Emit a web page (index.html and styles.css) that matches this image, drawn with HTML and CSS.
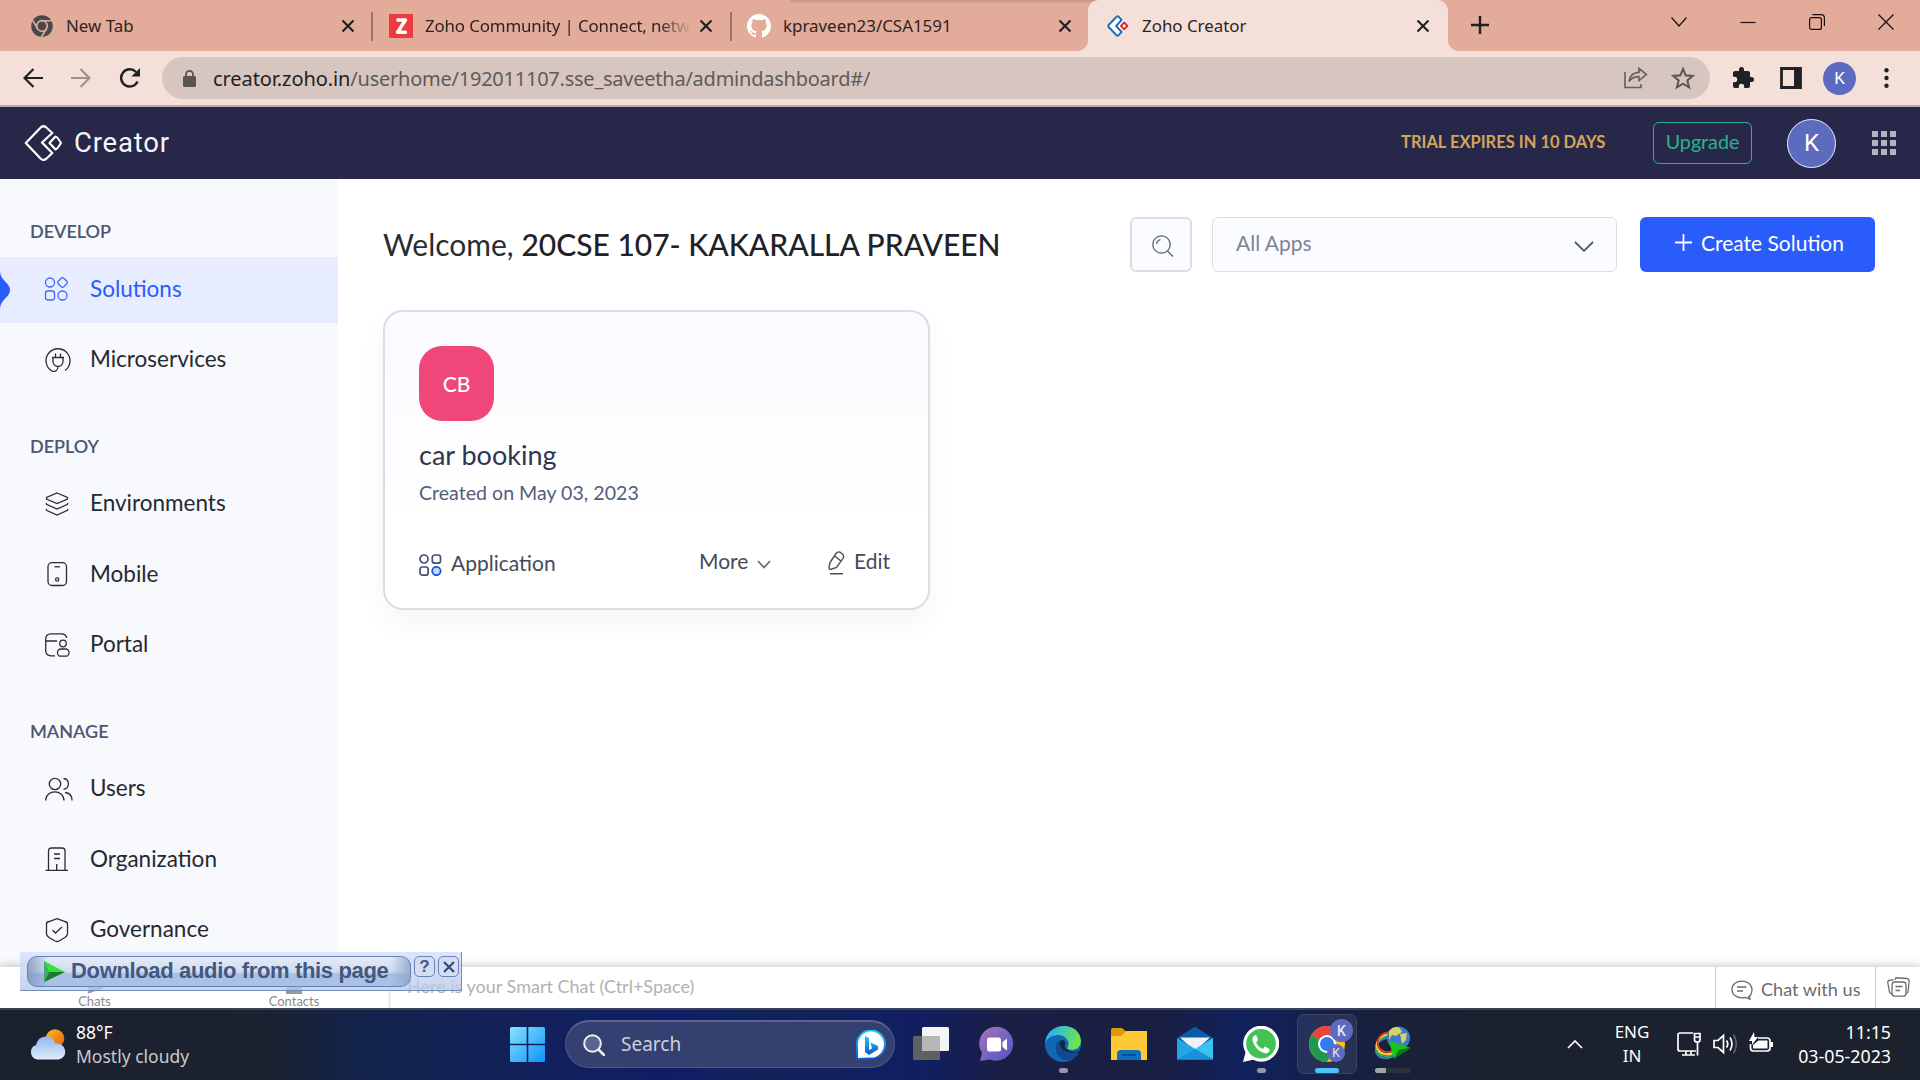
FILE: index.html
```html
<!DOCTYPE html>
<html lang="en">
<head>
<meta charset="utf-8">
<title>Zoho Creator</title>
<link rel="stylesheet" href="styles.css">
</head>
<body>
<div class="screen">

  <div class="tabstrip">
    <div class="tab">
      <svg class="favicon" viewBox="0 0 22 22"><circle cx="11" cy="11" r="10.8" fill="#474a4d"/><circle cx="11" cy="11" r="5.3" fill="none" stroke="#e3ab99" stroke-width="1.7"/><path d="M11 5.7H21M6.4 13.6 1.6 5.2M15.6 13.6 10.5 22" stroke="#e3ab99" stroke-width="1.6"/></svg>
      <span class="tab-title first">New Tab</span>
      <svg class="tab-x" viewBox="0 0 14 14"><path d="M1.5 1.5 12.5 12.5M12.5 1.5 1.5 12.5"/></svg>
    </div>
    <div class="tab tab-sep tab-two">
      <svg class="favicon big" viewBox="0 0 24 24"><path fill="#ec3a3e" d="M0 0H24V24H0z"/><path d="M8.800 6H16.500L8.500 18.300H16.500" fill="none" stroke="#fff" stroke-width="3.400" stroke-linejoin="round" stroke-linecap="round"/></svg>
      <span class="tab-title fade">Zoho Community | Connect, netw</span>
      <svg class="tab-x" viewBox="0 0 14 14"><path d="M1.5 1.5 12.5 12.5M12.5 1.5 1.5 12.5"/></svg>
    </div>
    <div class="tab tab-sep tab-three">
      <svg class="favicon big" viewBox="0 0 16 16"><path fill="#fff" d="M8 0C3.58 0 0 3.58 0 8c0 3.54 2.29 6.53 5.47 7.59.4.07.55-.17.55-.38 0-.19-.01-.82-.01-1.49-2.01.37-2.53-.49-2.69-.94-.09-.23-.48-.94-.82-1.13-.28-.15-.68-.52-.01-.53.63-.01 1.08.58 1.23.82.72 1.21 1.87.87 2.33.66.07-.52.28-.87.51-1.07-1.78-.2-3.64-.89-3.64-3.95 0-.87.31-1.59.82-2.15-.08-.2-.36-1.02.08-2.12 0 0 .67-.21 2.2.82a7.6 7.6 0 0 1 4 0c1.53-1.04 2.2-.82 2.2-.82.44 1.1.16 1.92.08 2.12.51.56.82 1.27.82 2.15 0 3.07-1.87 3.75-3.65 3.95.29.25.54.73.54 1.48 0 1.07-.01 1.93-.01 2.2 0 .21.15.46.55.38A8.01 8.01 0 0 0 16 8c0-4.42-3.58-8-8-8z"/></svg>
      <span class="tab-title">kpraveen23/CSA1591</span>
      <svg class="tab-x" viewBox="0 0 14 14"><path d="M1.5 1.5 12.5 12.5M12.5 1.5 1.5 12.5"/></svg>
    </div>
    <div class="tab tab-active">
      <svg class="favicon big" viewBox="0 0 24 24"><path d="M12 0 24 12 12 24 0 12z" fill="#fff"/><path d="M12.2 2.2 15.6 5.8 10.2 12 15.6 18 12.2 21.6Q11.5 22 10.8 21.4L2.4 12.8Q1.9 12 2.4 11.2L10.8 2.6Q11.5 2 12.2 2.2z" fill="none" stroke="#1c6fb8" stroke-width="2"/><path d="M18.2 8.4 21.4 12 18.2 15.4 15 12z" fill="none" stroke="#e6252c" stroke-width="2" stroke-linejoin="round"/></svg>
      <span class="tab-title">Zoho Creator</span>
      <svg class="tab-x" viewBox="0 0 14 14"><path d="M1.5 1.5 12.5 12.5M12.5 1.5 1.5 12.5"/></svg>
    </div>
    <svg class="newtab" viewBox="0 0 18 18"><path d="M9 0V18M0 9H18" stroke="#202124" stroke-width="2.4"/></svg>
    <div class="window-buttons">
      <svg viewBox="0 0 16 16"><path d="M.5 3.5 8 12 15.5 3.5"/></svg>
      <svg viewBox="0 0 16 16"><path d="M.5 8.5H15.5"/></svg>
      <svg viewBox="0 0 16 16"><rect x=".6" y="3.6" width="11.8" height="11.8" rx="2"/><path d="M3.4.6H12Q15.4.6 15.4 4V12"/></svg>
      <svg viewBox="0 0 16 16"><path d="M.5.5 15.5 15.5M15.5.5.5 15.5"/></svg>
    </div>
  </div>

  <div class="toolbar">
    <svg class="nav" viewBox="0 0 20 20"><path d="M20 10H2M10.5 1 1.5 10 10.5 19" fill="none" stroke="#202124" stroke-width="2.2"/></svg>
    <svg class="nav" viewBox="0 0 20 20"><path d="M0 10H18M9.5 1 18.5 10 9.5 19" fill="none" stroke="#a0918d" stroke-width="2.2"/></svg>
    <svg class="nav reload" viewBox="0 0 22 20"><path d="M18.6 13.5A8.6 8.6 0 1 1 17 4" fill="none" stroke="#202124" stroke-width="2.5"/><path d="M21 0V8.6H12.4z" fill="#202124"/></svg>
    <div class="omnibox">
      <svg class="lock" viewBox="0 0 13 17"><rect y="6" width="13" height="11" rx="1.5" fill="#5a5553"/><path d="M3 7V4.4a3.5 3.5 0 0 1 7 0V7" fill="none" stroke="#5a5553" stroke-width="1.8"/></svg>
      <span class="url"><b>creator.zoho.in</b>/userhome/192011107.sse_saveetha/admindashboard#/</span>
      <svg class="share" viewBox="0 0 24 22"><path d="M1 5V20.5H17V17M5 14.5C6 8 10 5.5 15 5.4V1.4L22.4 7.6 15 13.6V9.6C10.5 9.4 7.5 11 5 14.5z" fill="none" stroke="#665f5c" stroke-width="1.6"/></svg>
      <svg class="star" viewBox="0 0 24 24"><path d="M12 3.600 14.500 9.600 21 10.100 16 14.300 17.600 20.600 12 17.200 6.400 20.600 8 14.300 3 10.100 9.500 9.600z" fill="none" stroke="#5e5856" stroke-width="1.900"/></svg>
    </div>
    <svg class="puzzle" viewBox="0 0 24 24"><path fill="#202124" d="M20.5 11H19V7c0-1.1-.9-2-2-2h-4V3.500a2.500 2.500 0 0 0-5 0V5H4c-1.1 0-2 .9-2 2v3.800h1.500a2.700 2.700 0 0 1 0 5.400H2V20c0 1.100.9 2 2 2h3.800v-1.500a2.700 2.700 0 0 1 5.400 0V22H17c1.100 0 2-.9 2-2v-4h1.500a2.500 2.500 0 0 0 0-5z"/></svg>
    <svg class="panel" viewBox="0 0 22 22"><path d="M1.500 1.500H20.500V20.500H1.500z" fill="none" stroke="#202124" stroke-width="2.800"/><path d="M14 1H21V21H14z" fill="#202124"/></svg>
    <span class="avatar small">K</span>
    <svg class="dots" viewBox="0 0 5 20"><g fill="#202124"><circle cx="2.500" cy="2.300" r="2.200"/><circle cx="2.500" cy="10" r="2.200"/><circle cx="2.500" cy="17.700" r="2.200"/></g></svg>
  </div>

  <header class="appbar">
    <svg class="logo" viewBox="0 0 38 36"><g fill="none" stroke="#fff" stroke-width="2.200" stroke-linejoin="round"><path d="M22 2.200 28.300 8 18 17.500 28.300 28 22 34Q19.300 35.800 17 34L1.800 18 17 2.200Q19.500.3 22 2.200z"/><path d="M31.500 11.500Q33 11.500 37 18 33 24.500 31.500 24.500L25.500 18z"/></g></svg>
    <span class="brand">Creator</span>
    <span class="trial">TRIAL EXPIRES IN 10 DAYS</span>
    <span class="upgrade"><span>Upgrade</span></span>
    <span class="avatar large">K</span>
    <svg class="grid" viewBox="0 0 24 24"><path fill="#b2b5bf" d="M0 0h6v6H0zM9 0h6v6H9zM18 0h6v6h-6zM0 9h6v6H0zM9 9h6v6H9zM18 9h6v6h-6zM0 18h6v6H0zM9 18h6v6H9zM18 18h6v6h-6z"/></svg>
  </header>

  <div class="body">
    <nav class="sidebar">
      <h2 class="s1">DEVELOP</h2>
      <div class="item active">
        <svg class="notch" viewBox="0 0 10 36"><path d="M0 0C1 9 10 11 10 18S1 27 0 36z" fill="#2a5bfb"/></svg>
        <svg class="ico" viewBox="0 0 28 24"><circle cx="5" cy="5.500" r="4.500"/><path d="M16.200 1.300Q17.500.2 18.800 1.300L21.800 4.200Q22.900 5.500 21.800 6.800L18.800 9.700Q17.500 10.800 16.200 9.700L13.200 6.800Q12.100 5.500 13.200 4.200z"/><rect x=".5" y="14" width="9" height="9" rx="2.500"/><circle cx="17.500" cy="18.500" r="4.500"/></svg>
        <span>Solutions</span></div>
      <div class="item raised">
        <svg class="ico" viewBox="0 0 28 24"><path d="M20 22.500A12 12 0 1 0 6.500 22.800Q12.500 25 13 18.500M7 9.500H19M8 9.500V13Q8 18 13 18.500 18 18 18 13V9.500M10.500 5.500V9M15.500 5.500V9"/></svg>
        <span>Microservices</span></div>

      <h2 class="s2">DEPLOY</h2>
      <div class="item">
        <svg class="ico" viewBox="0 0 28 24"><path d="M12 1 22.500 5.500V7L12 11.500 1.500 7V5.500zM1 11 1.500 12.300 12 17 22.500 12.300 23 11M1 17 1.500 18.300 12 23 22.500 18.300 23 17"/></svg>
        <span>Environments</span></div>
      <div class="item">
        <svg class="ico" viewBox="0 0 28 24"><rect x="3" y=".7" width="18.500" height="22.800" rx="4"/><path d="M9.500 4.800H15" /><circle cx="12.200" cy="17.500" r="1.600"/></svg>
        <span>Mobile</span></div>
      <div class="item">
        <svg class="ico" viewBox="0 0 28 24"><path d="M21.500 5V4Q20.500 1 17 .8H6Q.8 1 .7 6V18Q1 22.500 6 22.800H10M1 8H12"/><circle cx="18" cy="10.500" r="3.300"/><rect x="12.500" y="16" width="11.500" height="7.200" rx="3.500"/></svg>
        <span>Portal</span></div>

      <h2 class="s3">MANAGE</h2>
      <div class="item">
        <svg class="ico" viewBox="0 0 28 24"><circle cx="10" cy="7" r="5.700"/><path d="M.7 23.500C1 12 18.500 12 19 23.500M18.500 1.500C25 2 25 11.500 18.500 12.300M20 15.500C25 16 27 19.500 27 23.500"/></svg>
        <span>Users</span></div>
      <div class="item">
        <svg class="ico" viewBox="0 0 28 24"><path d="M.5 23.300H23M3.500 23V4Q3.500 1 6.500 1H17Q20 1 20 4V23M9 7H15M9 11.500H15M11.700 17V23"/></svg>
        <span>Organization</span></div>
      <div class="item">
        <svg class="ico" viewBox="0 0 28 24"><path d="M12 .7 20 3.500Q22.500 4 22.500 6V16Q22.500 17.500 20 19.500L14 23Q12 24 10 23L4 19.500Q1.500 17.500 1.500 16V6Q1.500 4 4 3.500zM7.500 12 10.500 15 17 9"/></svg>
        <span>Governance</span></div>
    </nav>

    <main class="main">
      <div class="head">
        <h1>Welcome, <b>20CSE 107- KAKARALLA PRAVEEN</b></h1>
        <span class="search-btn"><svg viewBox="0 0 22 22"><circle cx="9.500" cy="9.500" r="8.700"/><path d="M15.500 16 21 21.500M4.500 9Q5 5.500 8.500 4.700"/></svg></span>
        <span class="select"><span>All Apps</span><svg viewBox="0 0 20 11"><path d="M1 1 10 9.800 19 1"/></svg></span>
        <span class="create"><svg viewBox="0 0 17 17"><path d="M8.500 0V17M0 8.500H17"/></svg><span>Create Solution</span></span>
      </div>
      <section class="card">
        <span class="tile">CB</span>
        <h3>car booking</h3>
        <p>Created on May 03, 2023</p>
        <div class="foot">
          <svg class="appico" viewBox="0 0 23 22"><g fill="none" stroke="#45506e" stroke-width="1.700"><circle cx="5" cy="5" r="4"/><rect x="13.300" y="1" width="8.200" height="8.200" rx="2.500"/><rect x="1" y="13" width="8.200" height="8.200" rx="2.500"/></g><circle cx="17.400" cy="17" r="4.200" fill="#c4d7fb" stroke="#0f5bdc" stroke-width="1.800"/></svg>
          <span class="f-app">Application</span>
          <span class="f-more">More</span>
          <svg class="f-chev" viewBox="0 0 14 9"><path d="M1 1 7 7.500 13 1"/></svg>
          <svg class="f-pen" viewBox="0 0 17 24"><path d="M2 11.500 8 2.500Q9.500.5 12 1.200L14.500 3Q16.500 5 15 7.300L8.500 16.500 2.500 18.500Q1 18.500 1 16.500zM6.800 5 12.800 10M2 22.800H15"/></svg>
          <span class="f-edit">Edit</span>
        </div>
      </section>
    </main>
  </div>

  <div class="chatbar">
    <div class="chat-tab"><svg viewBox="0 0 20 18"><path d="M10 0C22 0 23 14 12 14.500 9 15 6 17.500 2.500 17.500L4 13.500C-3 9 0 0 10 0z"/></svg><span>Chats</span></div>
    <div class="chat-tab second"><svg viewBox="0 0 20 18"><circle cx="10" cy="4.500" r="4.500"/><path d="M2 18V14Q2 10 6 10H14Q18 10 18 14V18z"/></svg><span>Contacts</span></div>
    <span class="smart">Here is your Smart Chat (Ctrl+Space)</span>
    <span class="chat-us"><svg viewBox="0 0 22 20"><path d="M17 17.500Q21 15 21 9.500C20.500-1.500 1-1.500 1 9.200 1 16 8 18.800 14.500 17.500L19 19.200 18.500 16M6 7H15.500M6 11H12"/></svg><span>Chat with us</span></span>
    <span class="notes"><svg viewBox="0 0 23 20"><rect x="5" y="5" width="14" height="14.200" rx="3"/><path d="M5 17Q3 17 2.500 15L.8 5.500Q.6 3.500 3 3.200L6.500 3M8 3 9 .8 20 1.500Q22.500 2 22.200 4L21 14.500Q20.800 16 19.500 16.500M8.500 9.500H15.500M8.500 13.500H13"/></svg></span>
  </div>

  <div class="taskbar">
    <div class="weather">
      <svg viewBox="0 0 37 31"><defs><linearGradient id="sun" x1="0" x2="1" y2="1"><stop stop-color="#f6c12f"/><stop offset="1" stop-color="#e95c0e"/></linearGradient><linearGradient id="cl" x2="0" y2="1"><stop stop-color="#8fb7f2"/><stop offset="1" stop-color="#e2edfd"/></linearGradient></defs><circle cx="26" cy="9.500" r="9.300" fill="url(#sun)"/><path d="M8 30.500A7.500 7.500 0 0 1 7.200 16C9 5 24 5 26 14.500 38 13 40 29 29 30.500z" fill="url(#cl)"/></svg>
      <div><span class="deg">88°F</span><span class="cloudy">Mostly cloudy</span></div>
    </div>
    <svg class="start" viewBox="0 0 35 35"><defs><linearGradient id="win" x2="1" y2="1"><stop stop-color="#86e3ff"/><stop offset="1" stop-color="#0b94f8"/></linearGradient></defs><path fill="url(#win)" d="M1.500 0H16.700V16.700H0V1.500Q0 0 1.500 0zM18.300 0H33.500Q35 0 35 1.500V16.700H18.300zM0 18.300H16.700V35H1.500Q0 35 0 33.500zM18.300 18.300H35V33.500Q35 35 33.500 35H18.300z"/></svg>
    <div class="search">
      <svg class="mag" viewBox="0 0 22 22"><circle cx="9.500" cy="9.500" r="8.300" fill="#59648f" stroke="#eceef4" stroke-width="2"/><path d="M15.500 15.500 21 21" stroke="#eceef4" stroke-width="2.600" stroke-linecap="round"/></svg>
      <span>Search</span>
      <svg class="bing" viewBox="0 0 30 30"><defs><linearGradient id="bi" x2="0" y2="1"><stop stop-color="#1bd0f4"/><stop offset="1" stop-color="#1452d4"/></linearGradient></defs><path d="M1 29V15A14 14 0 1 1 15 28.500z" fill="#fff" stroke="url(#bi)" stroke-width="2"/><path d="M9 6 13 8V20L16 18.500 14.500 12.500 22 16V19.500L13 25 9 22z" fill="url(#bi)"/></svg>
    </div>
    <div class="apps">
      <div class="slot"><svg viewBox="0 0 36 36"><rect y="10" width="27" height="24" rx="1.500" fill="#5f6061"/><rect x="9" y="1" width="27" height="24" rx="1.500" fill="#f4f4f4"/><path d="M9 10H27V25H9z" fill="#b7b7b7"/></svg></div>
      <div class="slot"><svg viewBox="0 0 36 36"><defs><linearGradient id="tm" x2="1" y2="1"><stop stop-color="#a873b5"/><stop offset="1" stop-color="#4d56c9"/></linearGradient></defs><path d="M1 35 3 27A17 17 0 1 1 11 33.500z" fill="url(#tm)"/><rect x="8" y="11.500" width="14" height="14" rx="2.500" fill="#fff"/><path d="M23.500 16 28 12.500V24.500L23.500 21z" fill="#fff"/></svg></div>
      <div class="slot"><svg viewBox="0 0 36 36"><defs><linearGradient id="ed" x2="1" y2=".3"><stop offset=".2" stop-color="#2bb3ea"/><stop offset="1" stop-color="#6ee255"/></linearGradient></defs><circle cx="18" cy="18" r="18" fill="#1167b4"/><path d="M0 18C1-5 35-6 36 15 36 23 27 26 22 22.500 26 17 22 10 14 9 6 9 1 13 0 18z" fill="url(#ed)"/><path d="M22 22.500C26 26 32 26 35 23 28 42 10 34 11 22 11 15 16 12.500 20 14.500 16 17 18 21 22 22.500z" fill="#124a8e"/><path d="M17 14.300C20 14 21 17 20 19 19.500 22 21 24 26 25.500 31 27 34 25 34.500 25L36 22V36L33 26C27 28 15 26 14.500 17z" fill="#17234c"/></svg><i></i></div>
      <div class="slot"><svg viewBox="0 0 36 36"><path d="M0 4Q0 2 2 2H11L15 5.500V10H0z" fill="#dd9a05"/><path d="M0 10H10L15 5H36V34H0z" fill="#fdc935"/><path d="M6 34V28Q6 24 10 24H26Q30 24 30 28V34z" fill="#0f6fbe"/><path d="M11 29H25" stroke="#0a4d8c" stroke-width="1.800"/></svg></div>
      <div class="slot"><svg viewBox="0 0 36 36"><path d="M0 12 18 .8 36 12V20H0z" fill="#0a5ca8"/><path d="M3 11.500H33L18 25z" fill="#eff2f6"/><path d="M0 12 36 33.500H0z" fill="#26a3e4"/><path d="M36 12 18 23 36 33.500z" fill="#39c3f0"/><path d="M0 33.500 18 23 36 33.500z" fill="#1793dc"/></svg></div>
      <div class="slot"><svg viewBox="0 0 36 36"><path d="M0 36 2.500 26.500A18 18 0 1 1 10 33.700z" fill="#fff"/><circle cx="18" cy="17.800" r="14.800" fill="#42c254"/><path d="M12 9Q9 10.500 9.500 14C11 21 16 26 23 27.500 26 27 27 25 26.500 23L22 20.500 19.800 23Q15 21 13.200 16.500L15 14 13.500 9.500z" fill="#fff"/></svg><i></i></div>
      <div class="slot current"><svg viewBox="0 0 36 36"><circle cx="18" cy="18" r="18" fill="#fbbf16"/><path d="M18 18 2.400 9A18 18 0 0 1 33.600 9z" fill="#e8453c"/><path d="M18 18 2.400 9A18 18 0 0 0 18 36L25 23z" fill="#1d9a50"/><circle cx="18" cy="18" r="9" fill="#fff"/><circle cx="18" cy="18" r="7" fill="#2f7df2"/></svg><em class="k1">K</em><em class="k2">K</em><i class="on"></i></div>
      <div class="slot"><svg viewBox="0 0 36 36"><g fill="none" stroke-width="2"><path d="M14 6C4 7-1 14 2 21 5 27 14 28 20 23" stroke="#3c76d6" transform="translate(-.5 6)"/><path d="M14 6C4 7-1 14 2 21 5 27 14 28 20 23" stroke="#39b13f" transform="translate(0 4)"/><path d="M14 6C4 7-1 14 2 21 5 27 14 28 20 23" stroke="#f6e53a" transform="translate(.7 2)"/><path d="M14 6C4 7-1 14 2 21 5 27 14 28 20 23" stroke="#e23a2a" transform="translate(1.500 0)"/></g><circle cx="23.500" cy="12" r="11.500" fill="#3b7cc9"/><path d="M14 5Q19-1 25 2L27 6 21 10 17 9 14 14zM25 8 32 7 31 14 27 18z" fill="#d8cf6a"/><path d="M14 15 36 22 24 24 19 33z" fill="#18c516"/><path d="M24 24 36 22 19 33z" fill="#0a7d10"/></svg><i class="wide"></i></div>
    </div>
    <div class="tray">
      <svg class="up" viewBox="0 0 16 9"><path d="M1 8 8 1 15 8"/></svg>
      <div class="lang"><span>ENG</span><span>IN</span></div>
      <svg class="net" viewBox="0 0 24 24"><path d="M16 1H3Q1 1 1 3V17Q1 19 3 19H19M5 23H18M9 19V23M14 19V23M17.500 1.500H23V8Q23 10 20.500 10 17.500 10 17.500 8zM17.500 5H23M20.500 10V23.500"/></svg>
      <svg class="snd" viewBox="0 0 24 24"><path d="M1 8.500H5L10.500 3.500V20.500L5 15.500H1zM13.500 8.500Q16 12 13.500 15.500M17 5.500Q21 12 17 18.500"/><path d="M20.500 2.500Q26 12 20.500 21.500" stroke="#59606d"/></svg>
      <svg class="bat" viewBox="0 0 24 24"><path d="M9 6H18Q21 6 21 9V16Q21 19 18 19H4Q1.500 19 1.500 16V12"/><path d="M9.500 8.500H18.500V16.500H4V13zM21 10H24V15H21zM5 0 0 9H3V13L9 5H5.500z" fill="#fff" stroke="none"/></svg>
      <div class="clock"><span class="time">11:15</span><span class="date">03-05-2023</span></div>
    </div>
  </div>

  <div class="download">
    <div class="pill"><svg viewBox="0 0 21 21"><path d="M0 0 21 11 0 21z" fill="#3be036"/><path d="M0 21 5 11H21z" fill="#1d7a34"/><path d="M0 0 5 11 0 21z" fill="#3fa873"/></svg><span>Download audio from this page</span></div>
    <span class="box">?</span>
    <span class="box"><svg viewBox="0 0 12 12"><path d="M1 1 11 11M11 1 1 11" stroke="#34497c" stroke-width="2.200"/></svg></span>
  </div>
</div>
</body>
</html>
```
FILE: styles.css
```css
* { box-sizing: border-box; }
body { margin: 0; }
h1, h2, h3, p { margin: 0; font-weight: 400; }
svg { display: block; flex: none; }
span { white-space: nowrap; }

.screen {
  position: relative;
  width: 1920px;
  height: 1080px;
  overflow: hidden;
  display: flex;
  flex-direction: column;
  background: #fff;
  font-family: "Lato", sans-serif;
}

/* browser tabs */
.tabstrip {
  height: 51px;
  flex: none;
  display: flex;
  background: linear-gradient(#0002, #0000) 790px 0 / 340px 4px no-repeat #e3ab99;
  font-family: "Noto Sans", sans-serif;
  font-size: 16.900px;
  color: #2d2422;
}
.tab { width: 371px; display: flex; align-items: center; padding: 0 16px 0 31px; }
.tab-two { width: 359px; padding: 0 17px 0 18px; }
.tab-three { width: 358px; padding: 0 16px 0 17px; }
.tab-sep { background: linear-gradient(#9c7468, #9c7468) 0 12px / 2px 29px no-repeat; }
.tab-active {
  width: 360px;
  padding: 0 18px 0 18px;
  background: #f5e0d9;
  border-radius: 11px 11px 0 0;
  position: relative;
}
.tab-active::before, .tab-active::after {
  content: "";
  position: absolute;
  bottom: 0;
  width: 10px;
  height: 10px;
}
.tab-active::before { left: -10px; background: radial-gradient(circle at 0 0, #0000 9.5px, #f5e0d9 10px); }
.tab-active::after { right: -10px; background: radial-gradient(circle at 100% 0, #0000 9.5px, #f5e0d9 10px); }
.favicon { width: 22px; height: 22px; }
.favicon.big { width: 24px; height: 24px; }
.tab-title { margin-left: 12px; padding-bottom: 1px; }
.first { margin-left: 13px; }
.fade {
  width: 266px;
  letter-spacing: -.150px;
  mask-image: linear-gradient(90deg, #000 88%, #0000 100%);
}
.tab-x { width: 14px; height: 14px; margin-left: auto; fill: none; stroke: #202124; stroke-width: 2.2; }
.newtab { width: 18px; height: 18px; margin: 16px 0 0 23px; }
.window-buttons { display: flex; gap: 53px; margin: 14px 0 0 182px; }
.window-buttons svg { width: 16px; height: 16px; fill: none; stroke: #15100f; stroke-width: 1.2; }

/* address bar */
.toolbar {
  height: 56px;
  flex: none;
  display: flex;
  align-items: center;
  padding-left: 23px;
  background: #f5e0d9;
  border-bottom: 2px solid #c2a9a8;
}
.nav { width: 20px; height: 20px; margin-right: 28px; }
.reload { width: 22px; margin-right: 21px; }
.omnibox {
  width: 1548px;
  height: 42px;
  display: flex;
  align-items: center;
  border-radius: 21px;
  background: #d7c6bf;
  padding: 0 14px 0 21px;
}
.lock { width: 13px; height: 17px; }
.url { margin-left: 17px; font: 20px "Noto Sans", sans-serif; color: #625a57; letter-spacing: -.24px; }
.url b { font-weight: 400; color: #202124; letter-spacing: -.08px; }
.share { width: 24px; height: 22px; margin-left: auto; }
.star { width: 26px; height: 26px; margin-left: 22px; }
.puzzle { width: 24px; height: 24px; margin-left: 21px; }
.panel { width: 22px; height: 22px; margin-left: 25px; }
.avatar {
  display: flex;
  align-items: center;
  justify-content: center;
  flex: none;
  border-radius: 50%;
  background: #5c6bc0;
  color: #fff;
  font-family: "Roboto", sans-serif;
}
.small { width: 33px; height: 33px; margin-left: 21px; font-size: 17px; }
.dots { width: 5px; height: 20px; margin-left: 28px; }

/* product header */
.appbar {
  height: 72px;
  flex: none;
  display: flex;
  align-items: center;
  padding-left: 24px;
  background: #272849;
}
.logo { width: 38px; height: 36px; }
.brand { width: 1326px; padding: 0 0 1px 12px; font: 27.500px "Roboto", sans-serif; color: #f4f4fa; letter-spacing: .800px; }
.trial { margin-left: 13px; width: 252px; padding-bottom: 2px; font-size: 16.500px; color: #d5a459; font-weight: 700; }
.upgrade {
  width: 99px;
  height: 42px;
  padding-bottom: 3px;
  border: 1px solid #29b38d;
  border-radius: 6px;
  display: flex;
  align-items: center;
  justify-content: center;
  color: #29b38d;
  font-size: 19.700px;
}
.large { width: 49px; height: 49px; margin-left: 35px; border: 1px solid #eef; font-size: 24px; }
.grid { width: 24px; height: 24px; margin-left: 36px; }

.body { height: 788px; flex: none; display: flex; }

/* side navigation */
.sidebar { width: 338px; background: #f7f9fd; }
.sidebar h2 {
  height: 26px;
  line-height: 26px;
  padding-left: 30px;
  font-size: 18px;
  font-weight: 600;
  color: #4c5671;
}
.sidebar .s1 { margin: 39px 0 13px; }
.sidebar .s2 { margin: 39px 0 12px; }
.sidebar .s3 { margin: 40px 0 12px; }
.item {
  position: relative;
  height: 66px;
  margin-bottom: 4.500px;
  display: flex;
  align-items: center;
  padding-left: 45px;
  font-size: 22.500px;
  color: #26282f;
}
.item span { margin-left: 17px; padding-bottom: 2px; }
.active span, .raised span { padding-bottom: 4px; }
.ico { width: 28px; height: 24px; overflow: visible; fill: none; stroke: #2b2d33; stroke-width: 1.300; }
.active { background: #e7ecfe; color: #2a5bfb; }
.active .ico { stroke: #3f6cf5; margin-bottom: 2px; }
.raised .ico { margin-bottom: 1px; }
.notch { position: absolute; left: 0; top: 15px; width: 10px; height: 36px; }

/* dashboard */
.main { width: 1582px; padding: 38px 45px 0; }
.head { display: flex; align-items: center; height: 55px; }
h1 { width: 747px; padding-bottom: 2px; font-size: 30px; color: #2a2c32; white-space: nowrap; }
h1 b { font-weight: 500; color: #202228; }
.search-btn, .select, .create {
  height: 55px;
  display: flex;
  align-items: center;
  flex: none;
  border-radius: 6px;
}
.search-btn { width: 62px; border: 2px solid #dadde8; background: #fbfcff; justify-content: center; }
.search-btn svg { width: 22px; height: 22px; margin: 3px 0 0 3px; fill: none; stroke: #59617a; stroke-width: 1.300; }
.select {
  width: 405px;
  margin-left: 20px;
  padding: 0 22px 4px 23px;
  justify-content: space-between;
  border: 1px solid #dadde8;
  background: #fbfcff;
  font-size: 21px;
  color: #7d8496;
}
.select svg { width: 20px; height: 11px; margin-top: 7px; fill: none; stroke: #4c5671; stroke-width: 1.800; }
.create { width: 235px; margin-left: 23px; padding: 0 0 4px 35px; background: #2a5bfb; color: #fff; font-size: 21px; }
.create svg { width: 17px; height: 17px; margin-right: 9px; stroke: #fff; stroke-width: 1.800; }

.card {
  width: 547px;
  height: 300px;
  margin-top: 38px;
  padding: 34px 34px 0;
  border: 2px solid #dadde9;
  border-radius: 20px;
  background: linear-gradient(#fafaff, #fff 70%);
  box-shadow: 0 12px 28px #0000000b;
}
.tile {
  width: 75px;
  height: 75px;
  display: flex;
  align-items: center;
  justify-content: center;
  border-radius: 23px;
  background: #f0477b;
  color: #fff;
  font-size: 21px;
  font-weight: 500;
}
.card h3 { margin-top: 17px; height: 34px; line-height: 34px; font-size: 27px; color: #2c3650; white-space: nowrap; }
.card p { margin-top: 8px; height: 26px; line-height: 26px; font-size: 19.600px; color: #525d7c; }
.foot { display: flex; align-items: center; margin-top: 40px; height: 30px; font-size: 21px; color: #454a59; }
.appico { width: 23px; height: 22px; margin-top: 8px; }
.f-app { width: 257px; padding: 2px 0 0 9px; }
.f-more { width: 57px; padding-bottom: 1px; }
.f-chev { width: 14px; height: 9px; margin: 7px 0 0 1px; fill: none; stroke: #666b75; stroke-width: 1.800; }
.f-pen { width: 17px; height: 24px; margin: 3px 0 0 57px; fill: none; stroke: #4d505a; stroke-width: 1.400; }
.f-edit { margin-left: 9px; padding-bottom: 1px; }

/* chat strip */
.chatbar {
  position: relative;
  height: 41px;
  flex: none;
  display: flex;
  background: #fff;
  box-shadow: 0 -2px 8px #0003;
  color: #8b8b8b;
}
.chat-tab {
  width: 188px;
  padding: 9px 0 0 1px;
  display: flex;
  flex-direction: column;
  align-items: center;
  font-size: 13px;
  line-height: 15px;
}
.chat-tab.second { width: 203px; padding-left: 12px; border-right: 3px solid #eee; }
.chatbar .chat-tab svg { width: 20px; height: 18px; fill: #999; stroke: none; }
.smart { width: 1324px; padding: 8px 0 0 16px; font-size: 18px; color: #b1b1b1; }
.chat-us { width: 160px; border-left: 1px solid #ccc; display: flex; align-items: center; font-size: 18.100px; color: #6c6c6c; padding: 5px 0 0 15px; }
.chat-us svg { width: 22px; height: 20px; margin-right: 8px; }
.chat-us span { padding-bottom: 2px; }
.notes { width: 45px; border-left: 1px solid #ccc; padding: 10px 0 0 11px; }
.notes svg { width: 23px; height: 20px; }
.chatbar svg { fill: none; stroke: #6c6c6c; stroke-width: 1.300; }

/* desktop taskbar */
.taskbar {
  position: relative;
  height: 72px;
  flex: none;
  display: flex;
  align-items: center;
  padding-bottom: 2px;
  border-top: 2px solid #3a4056;
  background: linear-gradient(90deg, #1b212d 0, #1b2230 260px, #12234c 370px, #12215a 520px, #101f66 680px, #11235a 760px, #111f62 920px, #1a1f45 1000px, #191f42 1160px, #11215d 1240px, #18203b 1380px, #1b212f 1480px, #1b212d);
  color: #fff;
  font-family: "Noto Sans", sans-serif;
}
.weather { width: 481px; margin-left: 29px; display: flex; align-items: center; font-size: 17.500px; }
.weather svg { width: 37px; height: 31px; margin-right: 10px; }
.weather div, .lang, .clock { display: flex; flex-direction: column; line-height: 24px; padding-bottom: 1px; }
.cloudy { color: #c9cbcf; }
.start { width: 35px; height: 35px; }
.search {
  width: 330px;
  height: 48px;
  margin-left: 20px;
  padding: 0 8px 0 17px;
  display: flex;
  align-items: center;
  border: 1px solid #4d5886;
  border-top: 2px solid #596391;
  border-radius: 24px;
  background: #34406f;
  font-size: 19px;
  color: #cdd1de;
}
.search span { margin-left: 16px; padding-bottom: 1px; }
.mag { width: 22px; height: 22px; }
.bing { width: 30px; height: 30px; margin-left: auto; }
.apps { display: flex; margin-left: 3px; }
.slot { position: relative; width: 66px; height: 60px; padding: 12px 0 0 15px; }
.slot svg { width: 36px; height: 36px; }
.slot i { position: absolute; left: 29px; bottom: 1px; width: 9px; height: 5px; border-radius: 3px; background: #9497ac; }
.slot .wide { left: 15px; width: 36px; background: linear-gradient(90deg, #a0a3aa 11px, #2b303e 11px); }
.slot .on { left: 21px; width: 24px; background: #4cc2ff; }
.current::before { content: ""; position: absolute; inset: 0 3px; border: 1px solid #3a4467; border-radius: 7px; background: #ffffff14; }
.current svg { position: relative; }
.slot em {
  position: absolute;
  display: flex;
  align-items: center;
  justify-content: center;
  border-radius: 50%;
  background: #5c6bc0;
  color: #e6e8f8;
  font: 14px "Roboto", sans-serif;
}
.slot .k1 { left: 36px; top: 5px; width: 23px; height: 23px; font-weight: 500; }
.slot .k2 { left: 33px; top: 30px; width: 18px; height: 18px; font-size: 12px; }
.tray { display: flex; align-items: center; margin-left: 141px; font-size: 17.800px; }
.tray svg { fill: none; stroke: #fff; stroke-width: 1.700; }
.up { width: 16px; height: 9px; }
.lang { width: 60px; margin-left: 19px; align-items: center; font-size: 17px; }
.net, .snd, .bat { width: 24px; height: 24px; margin-left: 15px; }
.snd, .bat { margin-left: 12px; }
.clock { width: 118px; align-items: flex-end; }

/* floating download helper, drawn above the page */
.download {
  position: absolute;
  left: 20px;
  top: 952px;
  width: 442px;
  height: 39px;
  display: flex;
  padding: 4px 0 0 7px;
  border: solid #6f8fb8;
  border-width: 0 1px 1px 0;
  background: linear-gradient(#d5e2ffd8, #b9c9e4c8);
}
.pill {
  width: 384px;
  height: 31px;
  display: flex;
  align-items: center;
  padding-left: 16px;
  border: 1px solid #6b80b5;
  border-radius: 10px;
  background: linear-gradient(90deg, #7d94bdcc, #0000 22px, #0000 362px, #8ba3cccc), linear-gradient(#e6ecf7ee, #cfdcf0ee 50%, #a5bce2e8 60%, #a8c0e8e8);
}
.pill svg { width: 21px; height: 21px; margin-right: 6px; }
.pill span { padding-bottom: 2px; font: bold 22px "Liberation Sans", sans-serif; color: #44577f; letter-spacing: -.350px; }
.box {
  width: 21px;
  height: 21px;
  margin-left: 3px;
  display: flex;
  align-items: center;
  justify-content: center;
  border: 1px solid #6b80b5;
  border-radius: 5px;
  background: #d4def2;
  font: bold 17px "Liberation Sans", sans-serif;
  color: #44577f;
}
.box svg { width: 12px; height: 12px; }
```
